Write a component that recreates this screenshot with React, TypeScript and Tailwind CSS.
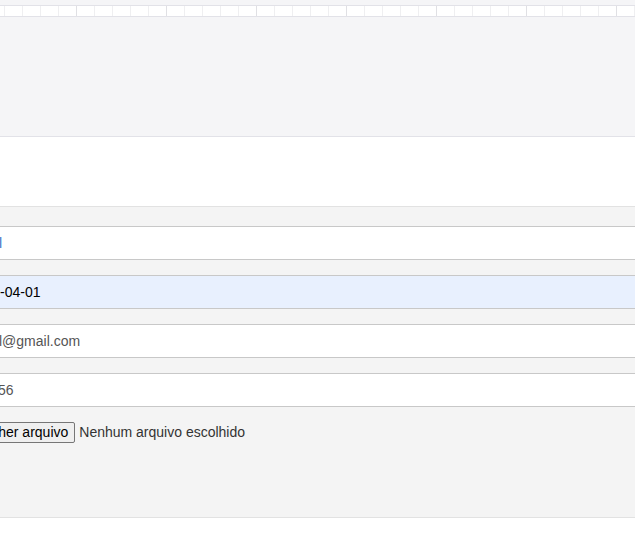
import React from 'react';

const cells = Array.from({ length: 38 });

const Field = ({
  prefix,
  shown,
  cut,
  className,
  textClass,
}: {
  prefix: string;
  shown: string;
  cut: number;
  className: string;
  textClass: string;
}) => (
  <div className={`h-[34px] border-y border-[#c8c8c8] flex items-center whitespace-nowrap overflow-hidden ${className}`}>
    <span className={`text-[14px] ${textClass}`} style={{ marginLeft: -cut }}>
      <span className="inline-block text-right" style={{ width: 200 }}>{prefix}</span>
      {shown}
    </span>
  </div>
);

export default function App() {
  return (
    <div className="w-[635px] h-[548px] overflow-hidden bg-white font-['Liberation_Sans',Arial,sans-serif]">
      {/* cabeçalho / régua */}
      <div className="h-[5px] bg-[#f5f5f7]" />
      <div className="h-[12px] border-y border-[#e2e2e8] bg-white flex overflow-hidden">
        <div className="flex shrink-0 -ml-[13px]">
          {cells.map((_, i) => (
            <div
              key={i}
              className={`w-[18px] h-full shrink-0 border-r ${i % 5 === 4 ? 'border-[#e0e0e4]' : 'border-[#efeff1]'}`}
            />
          ))}
        </div>
      </div>
      <div className="h-[120px] bg-[#f5f5f7] border-b border-[#e2e2e8]" />
      <div className="h-[70px] bg-white border-b border-[#e2e2e2]" />

      {/* formulário */}
      <div className="bg-[#f4f4f4] pt-[19px] flex flex-col gap-[15px]">
        <Field prefix="Danie" shown="l" cut={201} className="bg-white" textClass="text-[#3d74c7]" />
        <Field prefix="2000" shown="-04-01" cut={200} className="bg-[#e8f0fe]" textClass="text-black" />
        <Field prefix="danie" shown="l@gmail.com" cut={201} className="bg-white" textClass="text-[#555]" />
        <Field prefix="(11) 91234-34" shown="56" cut={202} className="bg-white" textClass="text-[#555]" />
      </div>
      <div className="h-[111px] bg-[#f4f4f4] border-b border-[#e2e2e2] pt-[15px] flex items-start whitespace-nowrap overflow-hidden">
        <div className="flex items-center -ml-[43px] text-[14px]">
          <span className="h-[21px] px-[6px] flex items-center border border-[#767676] rounded-[2px] bg-[#efefef] text-black">
            Escolher arquivo
          </span>
          <span className="ml-[4px] text-[#333]">Nenhum arquivo escolhido</span>
        </div>
      </div>
      <div className="h-[30px] bg-white" />
    </div>
  );
}
